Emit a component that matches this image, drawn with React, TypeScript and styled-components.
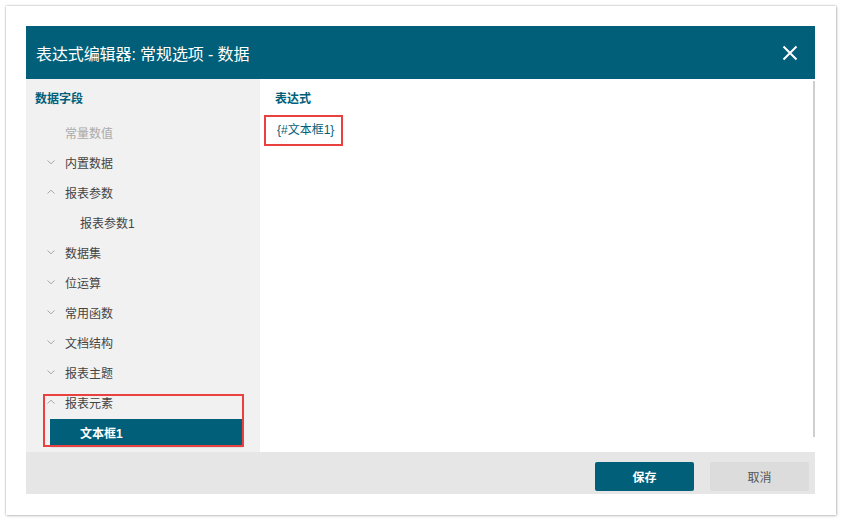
import React from "react";
import styled, { createGlobalStyle } from "styled-components";

const teal = "#015f79";

const GlobalStyle = createGlobalStyle`
  html, body {
    margin: 0;
    padding: 0;
    background: #ffffff;
  }
  body {
    font-family: "Liberation Sans", "Noto Sans CJK SC", sans-serif;
    font-size: 12px;
    color: #333;
  }
`;

const Frame = styled.div`
  margin: 6px;
  width: 830px;
  height: 509px;
  box-sizing: border-box;
  padding: 20px;
  background: #fff;
  box-shadow: 0 0 2px rgba(0, 0, 0, 0.35), 1px 1px 3px rgba(0, 0, 0, 0.15);
`;

const Dialog = styled.div`
  width: 789px;
  height: 468px;
  display: flex;
  flex-direction: column;
  background: #fff;
`;

const Header = styled.div`
  height: 53px;
  flex: none;
  background: ${teal};
  display: flex;
  align-items: center;
  justify-content: space-between;
  padding: 0 17px 0 10px;
`;

const Title = styled.div`
  color: #fff;
  font-size: 16px;
  letter-spacing: -0.1px;
`;

const CloseButton = styled.button`
  border: 0;
  background: none;
  padding: 0;
  width: 16px;
  height: 16px;
  display: flex;
  cursor: pointer;
`;

const Body = styled.div`
  flex: 1;
  display: flex;
  min-height: 0;
`;

const Sidebar = styled.div`
  width: 234px;
  flex: none;
  background: #f1f1f1;
  padding-top: 8px;
  box-sizing: border-box;
  overflow: hidden;
`;

const SectionTitle = styled.div`
  font-weight: bold;
  color: ${teal};
  font-size: 12px;
  line-height: 24px;
  padding-left: 9px;
  margin-bottom: 6px;
`;

const Row = styled.div<{ $indent: number; $muted?: boolean }>`
  height: 30px;
  display: flex;
  align-items: center;
  padding-left: ${(p) => p.$indent}px;
  color: ${(p) => (p.$muted ? "#aaaaaa" : "#444")};
  font-size: 12px;
`;

const Chevron = styled.svg`
  width: 8px;
  height: 6px;
  margin-right: 10px;
  flex: none;
`;

const SelectedRow = styled.div`
  height: 27px;
  margin: 2px 18px 1px 24px;
  display: flex;
  align-items: center;
  padding-left: 30px;
  background: ${teal};
  color: #fff;
  font-weight: bold;
  font-size: 12px;
  box-shadow: 1px 1px 1px rgba(0, 0, 0, 0.35);
`;

const Highlight = styled.div`
  position: relative;
  &::after {
    content: "";
    position: absolute;
    left: 17px;
    top: 7px;
    width: 201px;
    height: 53px;
    box-sizing: border-box;
    border: 2px solid #e8413f;
    pointer-events: none;
  }
`;

const Main = styled.div`
  flex: 1;
  padding: 2px 0 15px 0;
  display: flex;
  background: #fff;
`;

const Editor = styled.div`
  flex: 1;
  border-right: 2px solid #cfcfcf;
  padding: 6px 0 0 15px;
`;

const Label = styled.div`
  font-weight: bold;
  color: ${teal};
  font-size: 12px;
  line-height: 24px;
`;

const Expression = styled.div`
  display: inline-block;
  margin-left: -11px;
  margin-top: 4px;
  width: 79px;
  height: 31px;
  box-sizing: border-box;
  border: 2px solid #e8413f;
  padding-left: 11px;
  line-height: 26px;
  color: ${teal};
  font-size: 12px;
`;

const Footer = styled.div`
  height: 42px;
  flex: none;
  background: #e6e6e6;
  display: flex;
  justify-content: flex-end;
  align-items: flex-start;
  gap: 16px;
  padding: 10px 6px 0 0;
  box-sizing: border-box;
`;

const Button = styled.button<{ $primary?: boolean }>`
  width: 99px;
  height: 29px;
  border: 0;
  border-radius: 2px;
  font-family: inherit;
  font-size: 12px;
  font-weight: ${(p) => (p.$primary ? "bold" : "normal")};
  background: ${(p) => (p.$primary ? teal : "#dcdcdc")};
  color: ${(p) => (p.$primary ? "#fff" : "#555")};
  cursor: pointer;
`;

const Down = () => (
  <Chevron viewBox="0 0 8 6">
    <path d="M0.5 1.5 L4 4.8 L7.5 1.5" fill="none" stroke="#a8a8a8" strokeWidth="1" />
  </Chevron>
);

const Up = () => (
  <Chevron viewBox="0 0 8 6">
    <path d="M0.5 4.5 L4 1.2 L7.5 4.5" fill="none" stroke="#a8a8a8" strokeWidth="1" />
  </Chevron>
);

const collapsed = ["数据集", "位运算", "常用函数", "文档结构", "报表主题"];

export default function App() {
  return (
    <>
      <GlobalStyle />
      <Frame>
        <Dialog>
          <Header>
            <Title>表达式编辑器: 常规选项 - 数据</Title>
            <CloseButton aria-label="close">
              <svg width="16" height="16" viewBox="0 0 16 16">
                <path d="M1.5 1.5 L14.5 14.5 M14.5 1.5 L1.5 14.5" stroke="#fff" strokeWidth="2" />
              </svg>
            </CloseButton>
          </Header>
          <Body>
            <Sidebar>
              <SectionTitle>数据字段</SectionTitle>
              <Row $indent={39} $muted>常量数值</Row>
              <Row $indent={21}><Down />内置数据</Row>
              <Row $indent={21}><Up />报表参数</Row>
              <Row $indent={54}>报表参数1</Row>
              {collapsed.map((name) => (
                <Row key={name} $indent={21}><Down />{name}</Row>
              ))}
              <Highlight>
                <Row $indent={21}><Up />报表元素</Row>
                <SelectedRow>文本框1</SelectedRow>
              </Highlight>
            </Sidebar>
            <Main>
              <Editor>
                <Label>表达式</Label>
                <Expression>{"{#文本框1}"}</Expression>
              </Editor>
            </Main>
          </Body>
          <Footer>
            <Button $primary>保存</Button>
            <Button>取消</Button>
          </Footer>
        </Dialog>
      </Frame>
    </>
  );
}
